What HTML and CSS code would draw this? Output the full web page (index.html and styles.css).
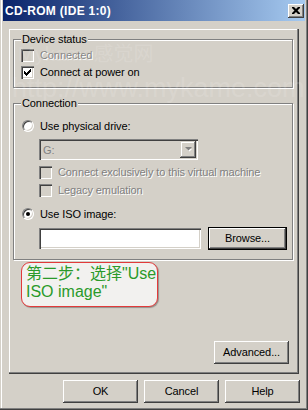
FILE: index.html
```html
<!DOCTYPE html>
<html>
<head>
<meta charset="utf-8">
<title>CD-ROM (IDE 1:0)</title>
<link rel="stylesheet" href="styles.css">
</head>
<body>
<div class="window">
  <div class="titlebar">
    <span class="title">CD-ROM (IDE 1:0)</span>
    <span class="close"><svg width="8" height="7" viewBox="0 0 8 7"><path d="M0 0h2l2 2 2-2h2v1l-2.5 2.5L8 6v1H6L4 5 2 7H0V6l2.5-2.5L0 1z" fill="#000"/></svg></span>
  </div>
  <div class="panel">
    <fieldset class="group device">
      <legend>Device status</legend>
      <div class="row off"><span class="check dis"></span><span>Connected</span></div>
      <div class="row"><span class="check"><svg width="7" height="7" viewBox="0 0 7 7"><path d="M0 2h1v1h1v1h1V3h1V2h1V1h1V0h1v3H6v1H5v1H4v1H3v1H2V6H1V5H0z" fill="#000"/></svg></span><span>Connect at power on</span></div>
    </fieldset>
    <fieldset class="group conn">
      <legend>Connection</legend>
      <div class="row radio-row"><span class="radio"></span><span>Use physical drive:</span></div>
      <div class="combo"><span class="combo-text">G:</span><span class="drop"><svg width="7" height="5" viewBox="0 0 7 5"><path d="M1 1h5L3.5 3.5z" fill="#fff" transform="translate(1 1)"/><path d="M0 0h7L3.5 3.5z" fill="#808080"/></svg></span></div>
      <div class="row indent off first"><span class="check dis"></span><span>Connect exclusively to this virtual machine</span></div>
      <div class="row indent off second"><span class="check dis"></span><span>Legacy emulation</span></div>
      <div class="row radio-row iso"><span class="radio on"></span><span>Use ISO image:</span></div>
      <div class="iso-line"><div class="textbox"></div><span class="btn default">Browse...</span></div>
    </fieldset>
    <div class="adv-line"><span class="btn">Advanced...</span></div>
  </div>
  <div class="footer">
    <span class="btn">OK</span>
    <span class="btn">Cancel</span>
    <span class="btn">Help</span>
  </div>
</div>
<div class="watermark wm1">Mykame感觉网</div>
<div class="watermark wm2">http://www.mykame.com</div>
<div class="callout">第二步：选择"Use<br>ISO image"</div>
</body>
</html>
```
FILE: styles.css
```css
* { box-sizing: border-box; }
html, body { margin: 0; padding: 0; }
body {
  width: 308px;
  height: 410px;
  background: #d4d0c8;
  font-family: "Liberation Sans", Arial, sans-serif;
  font-size: 11px;
  letter-spacing: -0.1px;
  color: #000;
  position: relative;
  overflow: hidden;
}
.window {
  width: 308px;
  height: 410px;
  padding: 0 3px 3px 3px;
  box-shadow: inset -1px -1px #404040, inset -2px -2px #808080, inset 1px 0 #d4d0c8, inset 2px 0 #fff;
  display: flex;
  flex-direction: column;
}
.titlebar {
  height: 21px;
  flex: none;
  background: linear-gradient(to right, #0a246a, #a6caf0);
  display: flex;
  align-items: center;
  padding: 0 1px 0 2px;
}
.title {
  flex: 1;
  color: #fff;
  font-weight: bold;
  font-size: 12px;
  letter-spacing: 0.3px;
  line-height: 14px;
}
.close {
  width: 16px;
  height: 14px;
  background: #d4d0c8;
  box-shadow: inset -1px -1px #404040, inset 1px 1px #fff, inset -2px -2px #808080;
  display: flex;
  align-items: center;
  justify-content: center;
  padding: 0 1px 1px 0;
}
.close svg { display: block; }
.panel {
  flex: none;
  height: 345px;
  margin: 8px 6px 0 6px;
  padding: 4px 6px 10px 4px;
  box-shadow: inset -1px -1px #404040, inset -2px -2px #808080, inset 1px 1px #fff;
  display: flex;
  flex-direction: column;
}
.group {
  margin: 0;
  min-width: 0;
  padding: 1px 0 6px 7px;
  border: 1px solid #808080;
  box-shadow: inset 1px 1px #fff, 1px 1px #fff;
}
.group legend {
  padding: 0 1px;
  margin: 0;
  line-height: 13px;
  background: #d4d0c8;
}
.conn { margin-top: 9px; padding-bottom: 9px; }
.row {
  display: flex;
  align-items: center;
  height: 17px;
  line-height: 13px;
  white-space: nowrap;
}
.row.off { color: #808080; text-shadow: 1px 1px 0 #fff; }
.check {
  width: 13px;
  height: 13px;
  flex: none;
  margin-right: 6px;
  background: #fff;
  box-shadow: inset 1px 1px #808080, inset 2px 2px #404040, inset -1px -1px #fff, inset -2px -2px #d4d0c8;
  display: flex;
  align-items: center;
  justify-content: center;
}
.check svg { display: block; }
.check.dis { background: #d4d0c8; }
.radio-row { height: 16px; margin-top: 7px; }
.radio {
  width: 12px;
  height: 12px;
  flex: none;
  margin: 0 6px 0 1px;
  border-radius: 50%;
  background: #fff;
  border: 1px solid;
  border-color: #808080 #fff #fff #808080;
  box-shadow: inset 1px 1px #404040, inset -1px -1px #d4d0c8;
  display: flex;
  align-items: center;
  justify-content: center;
}
.radio.on::after {
  content: "";
  width: 4px;
  height: 4px;
  border-radius: 50%;
  background: #000;
}
.combo {
  width: 159px;
  height: 21px;
  margin: 5px 0 0 18px;
  background: #d4d0c8;
  box-shadow: inset 1px 1px #808080, inset 2px 2px #404040, inset -1px -1px #fff, inset -2px -2px #d4d0c8;
  display: flex;
  align-items: center;
  padding: 2px 2px 2px 4px;
}
.combo-text { flex: 1; color: #808080; }
.drop {
  width: 16px;
  height: 17px;
  background: #d4d0c8;
  box-shadow: inset -1px -1px #404040, inset 1px 1px #d4d0c8, inset -2px -2px #808080, inset 2px 2px #fff;
  display: flex;
  align-items: center;
  justify-content: center;
}
.drop svg { display: block; overflow: visible; }
.indent { padding-left: 18px; }
.first { margin-top: 4px; }
.second { margin-top: 1px; }
.iso-line {
  display: flex;
  align-items: center;
  height: 23px;
  margin: 5px 0 0 18px;
}
.textbox {
  width: 162px;
  height: 21px;
  margin-right: 7px;
  background: #fff;
  box-shadow: inset 1px 1px #808080, inset 2px 2px #404040, inset -1px -1px #fff, inset -2px -2px #d4d0c8;
}
.btn {
  width: 75px;
  height: 23px;
  flex: none;
  display: flex;
  align-items: center;
  justify-content: center;
  background: #d4d0c8;
  box-shadow: inset -1px -1px #404040, inset 1px 1px #fff, inset -2px -2px #808080;
  line-height: 13px;
}
.btn.default {
  width: 79px;
  border: 1px solid #000;
}
.adv-line {
  margin-top: auto;
  display: flex;
  justify-content: flex-end;
  padding-right: 4px;
}
.footer {
  flex: none;
  margin-top: 6px;
  display: flex;
  justify-content: flex-end;
  gap: 6px;
  padding-right: 5px;
}
.watermark {
  position: absolute;
  color: rgba(255, 255, 255, 0.14);
  font-family: "Liberation Sans", "Noto Sans CJK SC", sans-serif;
  letter-spacing: 0;
  white-space: nowrap;
  pointer-events: none;
}
.wm1 { left: 18px; top: 42px; font-size: 20px; line-height: 24px; }
.wm2 { left: 12px; top: 72px; font-size: 27px; line-height: 32px; }
.callout {
  position: absolute;
  left: 21px;
  top: 262px;
  width: 137px;
  height: 45px;
  padding: 2px 0 0 4px;
  border: 1px solid #e23a3a;
  border-radius: 9px;
  background: #f2f1ef;
  box-shadow: 1px 1px 1px rgba(0, 0, 0, 0.3);
  color: #2a9a2a;
  font-family: "Liberation Sans", "Noto Sans CJK SC", sans-serif;
  font-size: 16px;
  letter-spacing: 0;
  line-height: 18px;
  white-space: nowrap;
}
```
